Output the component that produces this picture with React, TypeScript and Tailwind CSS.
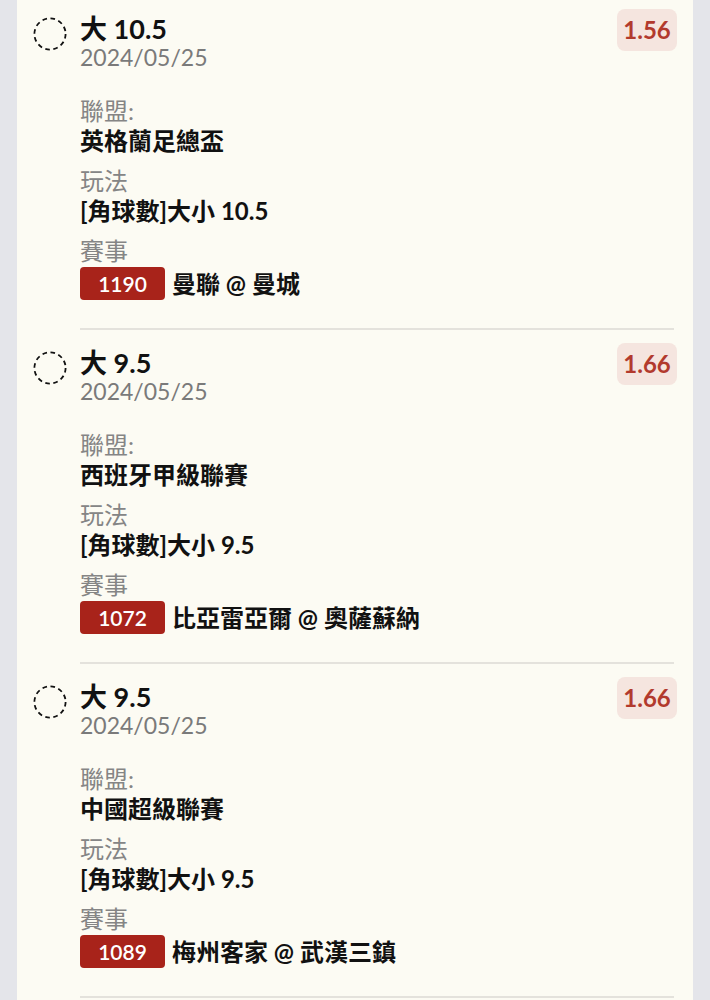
import React from "react";

type Bet = {
  title: string;
  date: string;
  odds: string;
  league: string;
  play: string;
  id: string;
  match: string;
};

const bets: Bet[] = [
  {
    title: "大 10.5",
    date: "2024/05/25",
    odds: "1.56",
    league: "英格蘭足總盃",
    play: "[角球數]大小 10.5",
    id: "1190",
    match: "曼聯 @ 曼城",
  },
  {
    title: "大 9.5",
    date: "2024/05/25",
    odds: "1.66",
    league: "西班牙甲級聯賽",
    play: "[角球數]大小 9.5",
    id: "1072",
    match: "比亞雷亞爾 @ 奧薩蘇納",
  },
  {
    title: "大 9.5",
    date: "2024/05/25",
    odds: "1.66",
    league: "中國超級聯賽",
    play: "[角球數]大小 9.5",
    id: "1089",
    match: "梅州客家 @ 武漢三鎮",
  },
];

function DashedCircle() {
  return (
    <svg width="34" height="34" viewBox="0 0 34 34" className="shrink-0 mt-[8px]">
      <circle
        cx="17"
        cy="17"
        r="15.6"
        fill="none"
        stroke="#111111"
        strokeWidth="1.8"
        strokeDasharray="4.6 3.57"
      />
    </svg>
  );
}

function BetItem({ bet }: { bet: Bet }) {
  return (
    <div className="flex pt-[13px] pl-[16px] pr-[16px]">
      <DashedCircle />
      <div className="flex-1 ml-[13px]">
        <div className="flex justify-between items-start">
          <div className="pt-[5px]">
            <div className="text-[27px] leading-[30px] font-bold text-[#111111]">{bet.title}</div>
            <div className="mt-[1px] text-[23px] leading-[24px] text-[#7a7a7a]">{bet.date}</div>
          </div>
          <div className="w-[60px] h-[42px] rounded-[8px] bg-[#f5e5df] flex items-center justify-center text-[24px] font-bold text-[#b23a2d]">
            {bet.odds}
          </div>
        </div>
        <div className="mt-[27px]">
          <div className="text-[24px] leading-[30px] text-[#858585]">聯盟:</div>
          <div className="text-[24px] leading-[30px] font-bold text-[#111111]">{bet.league}</div>
          <div className="mt-[10px] text-[24px] leading-[30px] text-[#858585]">玩法</div>
          <div className="text-[24px] leading-[30px] font-bold text-[#111111]">{bet.play}</div>
          <div className="mt-[10px] text-[24px] leading-[30px] text-[#858585]">賽事</div>
          <div className="mt-[1px] flex items-center">
            <div className="w-[85px] h-[33px] rounded-[4px] bg-[#a8231a] flex items-center justify-center text-[21px] font-semibold text-white">
              {bet.id}
            </div>
            <div className="ml-[7px] text-[24px] leading-[30px] font-bold text-[#111111]">{bet.match}</div>
          </div>
        </div>
        <div className="mt-[28px] mr-[3px] h-[2px] bg-[#e4e2dc]" />
      </div>
    </div>
  );
}

export default function App() {
  return (
    <div className="min-h-screen bg-[#e4e5ea] px-[17px] font-['Lato','Noto_Sans_CJK_TC',sans-serif]">
      <div className="min-h-screen bg-[#fcfbf3] overflow-hidden">
        <div className="-mt-[4px]">
          {bets.map((b, i) => (
            <BetItem key={i} bet={b} />
          ))}
        </div>
      </div>
    </div>
  );
}
